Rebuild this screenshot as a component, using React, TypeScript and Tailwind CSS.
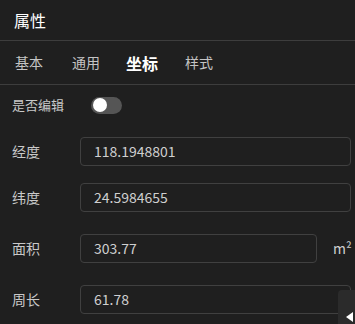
import React from 'react';

const font = { fontFamily: '"Noto Sans CJK SC", "Noto Sans", sans-serif' };

const tabs = [
  { name: '基本', cls: 'text-[14px] text-[#c4c4c4]' },
  { name: '通用', cls: 'ml-[29px] text-[14px] text-[#c4c4c4]' },
  { name: '坐标', cls: 'ml-[26px] text-[16px] font-bold text-white' },
  { name: '样式', cls: 'ml-[27px] text-[14px] text-[#c4c4c4]' },
];

const Field: React.FC<{ label: string; value: string; unit?: string; className?: string }> = ({
  label,
  value,
  unit,
  className,
}) => (
  <div className={`flex items-center ${className ?? ''}`}>
    <span className="w-[68px] shrink-0 text-[14px] text-[#c9c9c9]">{label}</span>
    <div
      className={`h-[29px] flex items-center rounded-[4px] border border-[#404040] pl-[13px] text-[14px] text-[#cfcfcf] ${
        unit ? 'w-[237px]' : 'w-[271px]'
      }`}
    >
      {value}
    </div>
    {unit && <span className="ml-[16px] text-[14px] text-[#cfcfcf]">{unit}</span>}
  </div>
);

export default function App() {
  return (
    <div className="relative w-[355px] h-[324px] overflow-hidden bg-[#1f1f1f]" style={font}>
      <div className="h-[41px] border-b border-[#3d3d3d] pl-[14px] flex items-center text-[16px] text-white">
        属性
      </div>
      <div className="h-[44px] border-b border-[#3d3d3d] flex items-center pl-[15px]">
        {tabs.map((t) => (
          <span key={t.name} className={t.cls}>
            {t.name}
          </span>
        ))}
      </div>
      <div className="pl-[12px]">
        <div className="h-[40px] flex items-center">
          <span className="w-[79px] shrink-0 text-[13px] text-[#c9c9c9]">是否编辑</span>
          <div className="w-[31px] h-[17px] rounded-full bg-[#555555] flex items-center pl-[2px]">
            <div className="w-[14px] h-[14px] rounded-full bg-white" />
          </div>
        </div>
        <Field label="经度" value="118.1948801" className="mt-[12px]" />
        <Field label="纬度" value="24.5984655" className="mt-[17px]" />
        <Field label="面积" value="303.77" unit="m²" className="mt-[22px]" />
        <Field label="周长" value="61.78" className="mt-[22px]" />
      </div>
      <div className="absolute left-[338px] top-[290px] w-[20px] h-[40px] rounded-tl-[4px] bg-[#2b2b2b] flex items-end pb-[8px] pl-[8px]">
        <div className="w-0 h-0 border-y-[5px] border-y-transparent border-r-[7px] border-r-white" />
      </div>
    </div>
  );
}
